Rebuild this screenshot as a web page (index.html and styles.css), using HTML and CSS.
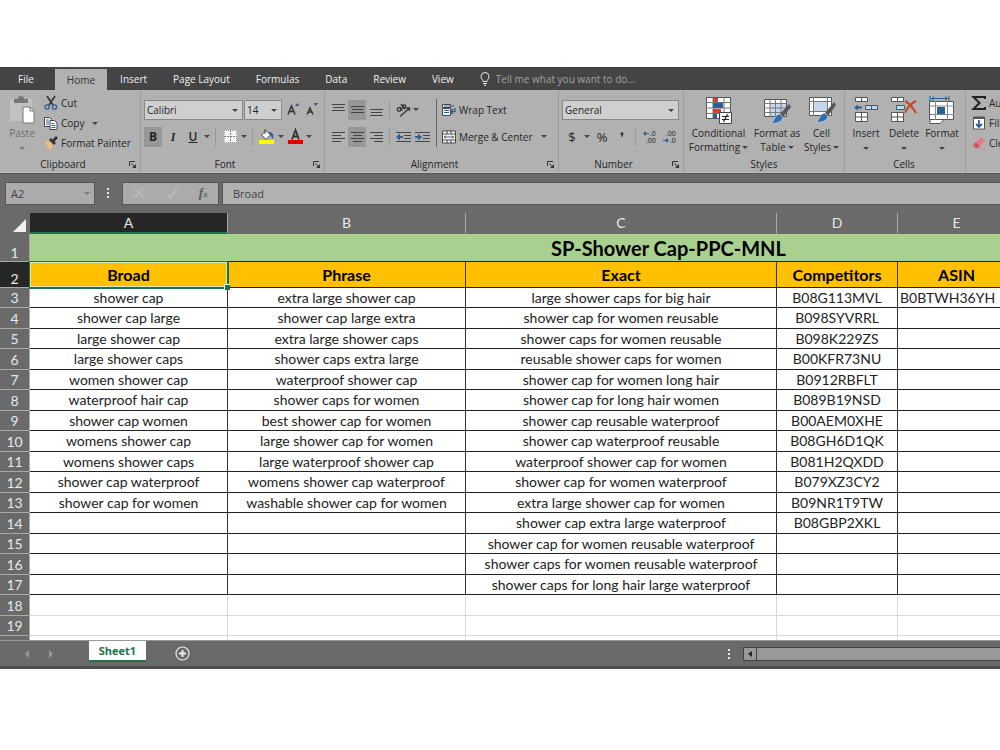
FILE: index.html
```html
<!DOCTYPE html>
<html lang="en">
<head>
<meta charset="utf-8">
<title>SP-Shower Cap-PPC-MNL</title>
<link rel="stylesheet" href="styles.css">
</head>
<body>
<main class="app">
  <nav class="tabs">
    <button class="tab file">File</button>
    <button class="tab active">Home</button>
    <button class="tab">Insert</button>
    <button class="tab">Page Layout</button>
    <button class="tab">Formulas</button>
    <button class="tab">Data</button>
    <button class="tab">Review</button>
    <button class="tab">View</button>
    <label class="tell">
      <svg width="10" height="14" viewBox="0 0 10 14" fill="none" stroke="#e8e8e8"><path d="M3 9.5C3 7.5 1 7 1 4.5a4 4 0 0 1 8 0C9 7 7 7.500 7 9.500zM3 11.500h4M4 13.300h2"/></svg>
      <input type="text" placeholder="Tell me what you want to do..." aria-label="Tell me what you want to do">
    </label>
  </nav>

  <section class="ribbon">
    <div class="group clipboard">
      <div class="body">
        <button class="big paste">
          <svg width="26" height="28" viewBox="0 0 26 28"><path d="M1 3h22v22H1z" fill="#c2c2c2"/><path d="M5 7V3h4a3 3 0 0 1 6 0h4v4z" fill="#777"/><path d="M14 11h7l4 4v12H14z" fill="#fff" stroke="#777"/><path d="M21 11v4h4" fill="none" stroke="#777"/></svg>
          <span>Paste</span><i class="arrow"></i>
        </button>
        <div class="stack">
          <button class="line"><svg width="14" height="14" viewBox="0 0 14 14" fill="none"><path d="M3 0l6 9M11 0L5 9" stroke="#3b3b3b" stroke-width="1.800"/><circle cx="3" cy="11" r="2.200" stroke="#2d5f94" stroke-width="1.300"/><circle cx="10.500" cy="11" r="2.200" stroke="#2d5f94" stroke-width="1.300"/></svg>Cut</button>
          <button class="line"><svg width="14" height="14" viewBox="0 0 14 14" fill="#fff" stroke="#444"><path d="M.5 1.500h5l2 2v7h-7z"/><path d="M6 4.500h4.500l2.500 2.500v6.500H6z"/><path d="M2 4h3M2 6h3M2 8h3M7.500 7.500h3M7.500 9.500h4M7.500 11.500h4" stroke="#2d5f94"/></svg>Copy<i class="arrow gap"></i></button>
          <button class="line"><svg width="14" height="14" viewBox="0 0 14 14"><path d="M1 5l5 1 3 4-4 4z" fill="#f2bd77"/><path d="M5 4l2-2 5 5-2 2z" fill="#333"/><path d="M8 4l4-4 2 2-4 4z" fill="#333"/></svg>Format Painter</button>
        </div>
      </div>
      <div class="caption">Clipboard<svg class="launch" width="7" height="7" viewBox="0 0 7 7"><path d="M.5 5V.5H6M2.500 2.500l3 3" stroke="#333" fill="none"/><path d="M7 3v4H3z" fill="#333"/></svg></div>
    </div>

    <div class="group font">
      <div class="body rows">
        <div class="row">
          <span class="pick name"><select aria-label="Font"><option>Calibri</option></select></span><span class="pick size"><select aria-label="Font size"><option>14</option></select></span>
          <button class="ic grow" aria-label="Grow font"><svg width="13" height="15" viewBox="0 0 13 15"><path d="M1 12.500L4.500 4 8 12.500M2.500 9.500h4" fill="none" stroke="#333" stroke-width="1.500"/><path d="M8 4l2.300-3L12.500 4z" fill="#2d5f94"/></svg></button>
          <button class="ic" aria-label="Shrink font"><svg width="13" height="15" viewBox="0 0 13 15"><path d="M1 12.500L4 6 7 12.500M2.300 10h3.500" fill="none" stroke="#333" stroke-width="1.400"/><path d="M7.500 1h4.500L9.800 4z" fill="#2d5f94"/></svg></button>
        </div>
        <div class="row tools">
          <button class="ic on b">B</button><button class="ic i">I</button><button class="ic u">U</button><i class="arrow"></i>
          <i class="sep"></i>
          <button class="ic" aria-label="Borders"><svg width="13" height="13" viewBox="0 0 13 13"><path d="M0 0h13v13H0z" fill="#f5f5f5"/><path d="M0 .5h13M0 12.500h13M.5 0v13M12.500 0v13" stroke="#999" stroke-dasharray="1 1"/><path d="M0 6.500h13M6.500 0v13" stroke="#777" stroke-dasharray="2 1"/></svg></button><i class="arrow"></i>
          <i class="sep"></i>
          <button class="ic" aria-label="Fill color"><svg width="16" height="15" viewBox="0 0 16 15"><path d="M0 11h15v4H0z" fill="#ff0"/><path d="M2.500 6L7 1.500 11.500 6 7 10.500z" fill="#fff" stroke="#444"/><path d="M6 0v5" stroke="#444"/><path d="M10 3c4 0 5 3 4 7-2-1-1-4-4-5z" fill="#2d5f94"/></svg></button><i class="arrow"></i>
          <button class="ic" aria-label="Font color"><svg width="15" height="15" viewBox="0 0 15 15"><path d="M0 11h15v4H0z" fill="#e00000"/><path d="M4 10.500L7.500 1 11 10.500M5 7.500h5" fill="none" stroke="#333" stroke-width="1.800"/></svg></button><i class="arrow"></i>
        </div>
      </div>
      <div class="caption">Font<svg class="launch" width="7" height="7" viewBox="0 0 7 7"><path d="M.5 5V.5H6M2.500 2.500l3 3" stroke="#333" fill="none"/><path d="M7 3v4H3z" fill="#333"/></svg></div>
    </div>

    <div class="group align">
      <div class="body">
        <div class="rows">
          <div class="row tight">
            <button class="ic" aria-label="Top align"><svg width="13" height="14" viewBox="0 0 13 14"><path d="M0 1.500h13M1 4.500h11M0 7.500h13" stroke="#444"/></svg></button>
            <button class="ic on" aria-label="Middle align"><svg width="13" height="14" viewBox="0 0 13 14"><path d="M0 3.500h13M1 6.500h11M0 9.500h13" stroke="#444"/></svg></button>
            <button class="ic" aria-label="Bottom align"><svg width="13" height="14" viewBox="0 0 13 14"><path d="M0 6.500h13M1 9.500h11M0 12.500h13" stroke="#444"/></svg></button>
            <i class="sep"></i>
            <button class="ic" aria-label="Orientation"><svg width="15" height="14" viewBox="0 0 15 14" fill="none" stroke="#333" stroke-width="1.300"><circle cx="3" cy="6.500" r="1.800"/><path d="M3.500 4l3 3.500M5 1l4 5"/><circle cx="8" cy="3.500" r="1.700"/><path d="M4 13.500L13.500 5M10.500 5h3v3"/></svg></button><i class="arrow"></i>
          </div>
          <div class="row tight">
            <button class="ic" aria-label="Align left"><svg width="13" height="12" viewBox="0 0 13 12"><path d="M0 1.500h13M0 4.500h9M0 7.500h13M0 10.500h9" stroke="#444"/></svg></button>
            <button class="ic on" aria-label="Center"><svg width="13" height="12" viewBox="0 0 13 12"><path d="M0 1.500h13M2 4.500h9M0 7.500h13M2 10.500h9" stroke="#444"/></svg></button>
            <button class="ic" aria-label="Align right"><svg width="13" height="12" viewBox="0 0 13 12"><path d="M0 1.500h13M4 4.500h9M0 7.500h13M4 10.500h9" stroke="#444"/></svg></button>
            <i class="sep"></i>
            <button class="ic" aria-label="Decrease indent"><svg width="15" height="12" viewBox="0 0 15 12"><path d="M0 1.500h15M8 4.500h7M8 7.500h7M0 10.500h15" stroke="#444"/><path d="M0 6l4-3.500V5h3v2H4v2.500z" fill="#2d5f94"/></svg></button>
            <button class="ic" aria-label="Increase indent"><svg width="15" height="12" viewBox="0 0 15 12"><path d="M0 1.500h15M8 4.500h7M8 7.500h7M0 10.500h15" stroke="#444"/><path d="M7 6L3 2.500V5H0v2h3v2.500z" fill="#2d5f94"/></svg></button>
          </div>
        </div>
        <i class="divider"></i>
        <div class="rows wraps">
          <button class="line"><svg width="14" height="14" viewBox="0 0 14 14"><path d="M.5 1.500h8v3h-8zM.5 5.500h8v7h-8z" fill="#fff" stroke="#444"/><path d="M2 3h10M2 7.500h5M2 9.500h5" stroke="#2d5f94"/><path d="M13 5v3.500H9M11 6l-2.500 2.500L11 11" fill="none" stroke="#2d5f94" stroke-width="1.400"/></svg>Wrap Text</button>
          <button class="line"><svg width="14" height="14" viewBox="0 0 14 14"><path d="M.5 1h13v12H.5z" fill="#fff" stroke="#444"/><path d="M0 4h14M0 10h14M5 1v3M9 1v3M5 10v3M9 10v3" stroke="#444"/><path d="M2 7h10M4 5.500L2.500 7 4 8.500M10 5.500L11.500 7 10 8.500" fill="none" stroke="#2d5f94"/></svg>Merge &amp; Center<i class="arrow gap"></i></button>
        </div>
      </div>
      <div class="caption">Alignment<svg class="launch" width="7" height="7" viewBox="0 0 7 7"><path d="M.5 5V.5H6M2.500 2.500l3 3" stroke="#333" fill="none"/><path d="M7 3v4H3z" fill="#333"/></svg></div>
    </div>

    <div class="group number">
      <div class="body rows">
        <div class="row"><span class="pick format"><select aria-label="Number format"><option>General</option></select></span></div>
        <div class="row">
          <button class="ic sym">$</button><i class="arrow"></i><button class="ic sym">%</button><button class="ic sym comma">❜</button>
          <i class="sep"></i>
          <button class="ic dec" aria-label="Increase decimal"><svg width="15" height="16" viewBox="0 0 15 16"><path d="M0 4.500L3 2v2h3v1H3v2z" fill="#2d5f94"/><text x="7" y="7">.0</text><text x="3" y="14">.00</text></svg></button>
          <button class="ic dec" aria-label="Decrease decimal"><svg width="15" height="16" viewBox="0 0 15 16"><text x="3" y="7">.00</text><path d="M6 11.500L3 9v2H0v1h3v2z" fill="#2d5f94"/><text x="7" y="14">.0</text></svg></button>
        </div>
      </div>
      <div class="caption">Number<svg class="launch" width="7" height="7" viewBox="0 0 7 7"><path d="M.5 5V.5H6M2.500 2.500l3 3" stroke="#333" fill="none"/><path d="M7 3v4H3z" fill="#333"/></svg></div>
    </div>

    <div class="group styles">
      <div class="body">
        <button class="big cond"><svg width="28" height="28" viewBox="0 0 28 28"><path d="M1.500 1.500h24v21h-24z" fill="#fff" stroke="#555"/><path d="M1 6.500h25M1 12h25M1 17.500h25M8 1v22M19 1v22" stroke="#777"/><path d="M8 2h5v4H8zM8 13h8v4H8z" fill="#c8452d"/><path d="M8 7h10v5H8zM8 18h4v4H8z" fill="#2d5f94"/><path d="M14.500 16.500h12v11h-12z" fill="#fff" stroke="#444"/><path d="M17 20.500h7M17 23.500h7M22.500 18l-4 8" stroke="#222" stroke-width="1.200"/></svg><span>Conditional<br>Formatting<i class="arrow"></i></span></button>
        <button class="big tbl"><svg width="28" height="28" viewBox="0 0 28 28"><path d="M1.500 3.500h22v17h-22z" fill="#fff" stroke="#555"/><path d="M7 8h16v12H7z" fill="#c3d8eb"/><path d="M1 7.500h23M1 12h23M1 16.500h23M7 3v18M12.500 3v18M18 3v18" stroke="#777"/><path d="M26 8l2 3-8 10-3-3z" fill="#555"/><path d="M17 18l3 3c-1 5-6 7-12 6 4-2 3-8 9-9z" fill="#2d6db0" stroke="#e8e8e8" stroke-width=".6"/></svg><span>Format as<br>Table<i class="arrow"></i></span></button>
        <button class="big cell"><svg width="28" height="28" viewBox="0 0 28 28"><path d="M1.500 1.500h22v18h-22z" fill="#fff" stroke="#555"/><path d="M6 6h13v9H6z" fill="#c3d8eb"/><path d="M1 5.500h23M1 15.500h23M5.500 1v19M19.500 1v19" stroke="#777"/><path d="M26 6l2 3-8 11-3-3z" fill="#555"/><path d="M17 17l3 3c-1 5-6 7-12 6 4-2 3-8 9-9z" fill="#2d6db0" stroke="#e8e8e8" stroke-width=".6"/></svg><span>Cell<br>Styles<i class="arrow"></i></span></button>
      </div>
      <div class="caption">Styles</div>
    </div>

    <div class="group cells">
      <div class="body">
        <button class="big"><svg width="26" height="28" viewBox="0 0 26 28" fill="#fff" stroke="#555"><path d="M2.500 1.500h12v4h-12zM8.500 1.500v4M2.500 16.500h12v9h-12zM8.500 16.500v9M2.500 21h12"/><path d="M12.500 9.500h12v4h-12zM18.500 9.500v4" fill="#c3d8eb" stroke="#2d5f94"/><path d="M1 11.500l4-3v2h4v2H5v2z" fill="#2d5f94" stroke="none"/></svg><span>Insert</span><i class="arrow"></i></button>
        <button class="big"><svg width="26" height="28" viewBox="0 0 26 28" fill="#fff" stroke="#555"><path d="M.5 1.500h12v4H.5zM6.500 1.500v4M.5 16.500h12v9H.5zM6.500 16.500v9M.5 21h12"/><path d="M5.500 9.500h8v4h-8z" fill="#c3d8eb" stroke="#2d5f94"/><path d="M14 5c4 2 8 7 11 12M25 5c-4 2-9 7-11 12" fill="none" stroke="#c8452d" stroke-width="2"/></svg><span>Delete</span><i class="arrow"></i></button>
        <button class="big"><svg width="26" height="28" viewBox="0 0 26 28" fill="#fff" stroke="#555"><path d="M.5 5.500h24v18h-24zM1 23.500h14l-4 4H1z"/><path d="M1 10h24M1 18.500h24M6.500 5v19M18.500 5v19" stroke="#888"/><path d="M8 11h8v7H8z" fill="#2d5f94" stroke="none"/><path d="M1 0v5M20 0v5M2 2.500h17M5 .5l-2.500 2L5 4.500M16 .5l2.500 2-2.500 2" fill="none" stroke="#2d5f94"/></svg><span>Format</span><i class="arrow"></i></button>
      </div>
      <div class="caption">Cells</div>
    </div>

    <div class="group editing">
      <div class="body stack">
        <button class="line"><svg width="14" height="14" viewBox="0 0 14 14"><path d="M13 3V1H1.500l6 6-6 6H13v-2" fill="none" stroke="#222" stroke-width="2"/></svg>AutoSum</button>
        <button class="line"><svg width="14" height="14" viewBox="0 0 14 14"><path d="M1.500 1h11v12h-11z" fill="#fff" stroke="#555"/><path d="M1 2h12" stroke="#555" stroke-width="2"/><path d="M7 4v7M4 8l3 3 3-3" fill="none" stroke="#2d5f94" stroke-width="1.800"/></svg>Fill</button>
        <button class="line"><svg width="14" height="14" viewBox="0 0 14 14"><path d="M4 6l5-5 4 4-5 5z" fill="#e8768a"/><path d="M1 9l3-3 4 4-2 2H3z" fill="#d2536b"/><path d="M5 12.500h8" stroke="#d98c99"/></svg>Clear</button>
      </div>
    </div>
  </section>

  <section class="formula">
    <span class="pick box"><input type="text" value="A2" aria-label="Name box"></span>
    <i class="dots"></i>
    <div class="fx">
      <button aria-label="Cancel"><svg width="12" height="12" viewBox="0 0 12 12"><path d="M1.500 1.500l9 9M10.500 1.500l-9 9" stroke="#bcbcbc" stroke-width="1.500"/></svg></button>
      <button aria-label="Enter"><svg width="12" height="12" viewBox="0 0 12 12"><path d="M1 6.500l3.500 4L11 2" fill="none" stroke="#bcbcbc" stroke-width="1.800"/></svg></button>
      <button class="fn">f<small>x</small></button>
    </div>
    <input class="entry" type="text" value="Broad" aria-label="Formula bar">
  </section>

  <section class="sheet">
    <table>
      <colgroup><col class="cn"><col class="ca"><col class="cb"><col class="cc"><col class="cd"><col class="ce"><col class="cf"></colgroup>
      <thead><tr><th class="corner"><svg width="13" height="13" viewBox="0 0 13 13"><path d="M13 0v13H0z" fill="#f0f0f0"/></svg></th><th class="sel">A</th><th>B</th><th>C</th><th>D</th><th>E</th><th>F</th></tr></thead>
      <tbody>
        <tr class="title"><th>1</th><td colspan="6">SP-Shower Cap-PPC-MNL</td></tr>
        <tr class="heads"><th class="sel">2</th><td class="cursor">Broad</td><td>Phrase</td><td>Exact</td><td>Competitors</td><td>ASIN</td><td></td></tr>
        <tr><th>3</th><td>shower cap</td><td>extra large shower cap</td><td>large shower caps for big hair</td><td>B08G113MVL</td><td class="left">B0BTWH36YH</td><td></td></tr>
        <tr><th>4</th><td>shower cap large</td><td>shower cap large extra</td><td>shower cap for women reusable</td><td>B098SYVRRL</td><td></td><td></td></tr>
        <tr><th>5</th><td>large shower cap</td><td>extra large shower caps</td><td>shower caps for women reusable</td><td>B098K229ZS</td><td></td><td></td></tr>
        <tr><th>6</th><td>large shower caps</td><td>shower caps extra large</td><td>reusable shower caps for women</td><td>B00KFR73NU</td><td></td><td></td></tr>
        <tr><th>7</th><td>women shower cap</td><td>waterproof shower cap</td><td>shower cap for women long hair</td><td>B0912RBFLT</td><td></td><td></td></tr>
        <tr><th>8</th><td>waterproof hair cap</td><td>shower caps for women</td><td>shower cap for long hair women</td><td>B089B19NSD</td><td></td><td></td></tr>
        <tr><th>9</th><td>shower cap women</td><td>best shower cap for women</td><td>shower cap reusable waterproof</td><td>B00AEM0XHE</td><td></td><td></td></tr>
        <tr><th>10</th><td>womens shower cap</td><td>large shower cap for women</td><td>shower cap waterproof reusable</td><td>B08GH6D1QK</td><td></td><td></td></tr>
        <tr><th>11</th><td>womens shower caps</td><td>large waterproof shower cap</td><td>waterproof shower cap for women</td><td>B081H2QXDD</td><td></td><td></td></tr>
        <tr><th>12</th><td>shower cap waterproof</td><td>womens shower cap waterproof</td><td>shower cap for women waterproof</td><td>B079XZ3CY2</td><td></td><td></td></tr>
        <tr><th>13</th><td>shower cap for women</td><td>washable shower cap for women</td><td>extra large shower cap for women</td><td>B09NR1T9TW</td><td></td><td></td></tr>
        <tr><th>14</th><td></td><td></td><td>shower cap extra large waterproof</td><td>B08GBP2XKL</td><td></td><td></td></tr>
        <tr><th>15</th><td></td><td></td><td>shower cap for women reusable waterproof</td><td></td><td></td><td></td></tr>
        <tr><th>16</th><td></td><td></td><td>shower caps for women reusable waterproof</td><td></td><td></td><td></td></tr>
        <tr><th>17</th><td></td><td></td><td>shower caps for long hair large waterproof</td><td></td><td></td><td></td></tr>
        <tr class="plain"><th>18</th><td></td><td></td><td></td><td></td><td></td><td></td></tr>
        <tr class="plain"><th>19</th><td></td><td></td><td></td><td></td><td></td><td></td></tr>
        <tr class="plain stub"><th></th><td></td><td></td><td></td><td></td><td></td><td></td></tr>
      </tbody>
    </table>
  </section>

  <footer class="bottom">
    <div class="arrows">
      <button aria-label="Previous sheet"><svg width="4" height="8" viewBox="0 0 4 8"><path d="M4 0v8L0 4z" fill="#9a9a9a"/></svg></button>
      <button aria-label="Next sheet"><svg width="4" height="8" viewBox="0 0 4 8"><path d="M0 0v8l4-4z" fill="#9a9a9a"/></svg></button>
    </div>
    <button class="sheettab">Sheet1</button>
    <button class="add" aria-label="New sheet"><svg width="15" height="15" viewBox="0 0 15 15" fill="none" stroke="#ececec"><circle cx="7.500" cy="7.500" r="6.500" stroke-width="1.200"/><path d="M7.500 4v7M4 7.500h7" stroke-width="2"/></svg></button>
    <i class="dots"></i>
    <div class="scroll"><button aria-label="Scroll left"><svg width="4" height="6" viewBox="0 0 4 6"><path d="M4 0v6L0 3z" fill="#222"/></svg></button><div class="thumb"></div></div>
  </footer>
</main>
</body>
</html>
```
FILE: styles.css
```css
* { box-sizing: border-box; }
body { margin: 0; background: #fff; }
button, input, select {
  font: inherit; color: inherit; background: none; border: 0; padding: 0; margin: 0;
  border-radius: 0; appearance: none; outline: 0; white-space: nowrap;
}
svg { display: block; flex: none; overflow: visible; }
.app { margin-top: 67px; overflow: hidden; font: 10px/14px "Open Sans", "Noto Sans", sans-serif; color: #262626; background: #6a6a6a; }

.tabs { display: flex; height: 23px; background: #444; color: #f0f0f0; }
.tab { padding: 1px 13px 0; }
.tab.file { padding: 1px 21px 0 18px; }
.tab.active { background: #b1b1b1; color: #333; margin-top: 2px; padding: 0 12px; }
.tell { display: flex; align-items: center; gap: 6px; padding-left: 13px; flex: 1; }
.tell input { width: 200px; padding-top: 1px; }
.tell input::placeholder { color: #a2a2a2; opacity: 1; }

.ribbon { display: flex; height: 83px; background: #b1b1b1; border-bottom: 1px solid #bcbcbc; }
.group { display: flex; flex-direction: column; flex: none; padding: 3px 0 2px; border-right: 1px solid #9c9c9c; }
.body { display: flex; flex: 1; }
.caption { position: relative; text-align: center; line-height: 12px; }
.launch { position: absolute; right: 4px; top: 3px; }
.clipboard { width: 141px; padding-left: 6px; }
.clipboard .caption { padding-right: 20px; }
.font { width: 184px; padding-left: 3px; }
.font .caption { padding-right: 18px; }
.align { width: 234px; padding-left: 4px; }
.align .caption { padding-right: 18px; }
.number { width: 125px; padding-left: 3px; }
.number .caption { padding-right: 18px; }
.styles { width: 161px; }
.cells { width: 121px; padding-left: 2px; }
.cells .caption { padding-right: 4px; }
.editing { width: 120px; padding-left: 6px; border: 0; }

.arrow { display: inline-block; flex: none; border: 3px solid transparent; border-top-color: #444; border-bottom: 0; }
.arrow.gap { margin-left: 5px; }
.big { display: flex; flex: none; flex-direction: column; align-items: center; padding-top: 3px; line-height: 14px; }
.big svg { margin-bottom: 2px; }
.big > .arrow { margin-top: 7px; }
.big span .arrow { margin: 0 0 2px 2px; }
.paste { width: 32px; color: #6e6e6e; }
.paste .arrow { border-top-color: #777; }
.cond { width: 69px; }
.tbl { width: 48px; }
.cell { width: 41px; }
.cells .big { width: 38px; }
.stack { display: flex; flex-direction: column; }
.line { display: flex; align-items: center; gap: 3px; height: 20px; text-align: left; }
.clipboard .stack { padding-left: 6px; }
.rows { display: flex; flex-direction: column; gap: 6px; padding-top: 6px; }
.row { display: flex; align-items: center; height: 21px; gap: 2px; }
.font .row { gap: 1px; }
.font .tools { gap: 2px; }
.tight { gap: 1px; }
.ic { display: flex; align-items: center; justify-content: center; width: 18px; height: 20px; font-size: 12px; }
.ic.on { background: #979797; }
.ic.b { font-weight: 700; }
.ic.i { font-family: "Liberation Serif", serif; font-style: italic; font-weight: 700; }
.ic.u { font-weight: 600; text-decoration: underline; }
.ic.grow { margin-left: 1px; }
.ic.sym { font-size: 13px; width: 20px; }
.ic.comma { width: 16px; }
.dec text { font: 7px "Open Sans", sans-serif; fill: #222; }
.sep { width: 1px; height: 18px; margin: 0 3px; background: #999; flex: none; }
.divider { width: 1px; height: 48px; margin: 6px 5px 0 5px; background: #666; }
.wraps .line { height: 21px; }

.pick { position: relative; display: block; background: #cfcfcf; border: 1px solid #888; height: 20px; flex: none; }
.pick::after { content: ""; position: absolute; right: 4px; top: 8px; border: 3px solid transparent; border-top-color: #444; border-bottom: 0; pointer-events: none; }
.pick select, .pick input { width: 100%; height: 18px; padding-left: 2px; }
.pick.name { width: 99px; }
.pick.size { width: 38px; }
.pick.format { width: 117px; }

.formula { display: flex; align-items: center; height: 40px; padding-bottom: 1px; color: #444; border-top: 1px solid #5a5a5a; }
.pick.box { width: 90px; height: 23px; margin-left: 5px; background: #ababab; border-color: #555; font-size: 11px; }
.pick.box input { height: 21px; padding-left: 5px; }
.pick.box::after { border-top-color: #7c7c7c; top: 9px; }
.dots { width: 2px; height: 10px; flex: none; background: repeating-linear-gradient(#e8e8e8 0 2px, transparent 2px 4px); }
.formula .dots { margin: 0 13px 0 12px; }
.fx { display: flex; align-items: center; justify-content: space-around; width: 97px; height: 23px; background: #ababab; border: 1px solid #555; flex: none; }
.fn { font: italic 700 13px/18px "Liberation Serif", serif; color: #5c5c5c; }
.fn small { font-size: 9px; }
.entry { flex: 1; min-width: 0; height: 23px; margin-left: 3px; padding-left: 10px; background: #b1b1b1; border: 1px solid #555; border-right: 0; font-size: 11px; }

.sheet { overflow: hidden; background: #fff; }
table { table-layout: fixed; width: 1308px; border-collapse: separate; border-spacing: 0; font: 14px/18px Lato, sans-serif; color: #222; }
.cn { width: 30px; } .ca { width: 198px; } .cb { width: 238px; } .cc { width: 311px; } .cd { width: 121px; } .ce { width: 118px; } .cf { width: 292px; }
th, td { padding: 0; text-align: center; white-space: nowrap; overflow: hidden; }
th { font-weight: 400; background: #6a6a6a; color: #e8e8e8; border-right: 1px solid #a8a8a8; border-bottom: 1px solid #a8a8a8; }
th.sel { background: #262626; }
thead th { height: 21px; border-bottom-color: #6a6a6a; }
thead .sel { border-bottom: 2px solid #217346; }
.corner { border-color: #6a6a6a; }
.corner svg { margin: 4px 0 0 13px; }
tbody th { line-height: 17px; }
tbody tr { height: 21px; }
tbody tr:nth-child(odd) { height: 20px; }
td { border-right: 1px solid #333; border-bottom: 1px solid #222; }
tbody tr.title { height: 28px; }
.title td { background: #a9d08e; font-size: 20px; line-height: 26px; font-weight: 700; color: #000; }
tbody tr.heads { height: 26px; }
.title th, .heads th { vertical-align: bottom; }
.heads td { background: #ffc000; font-size: 16px; font-weight: 700; color: #000; }
.heads .cursor { position: relative; overflow: visible; box-shadow: inset 0 0 0 1px #d8e8c0; border-color: #217346; outline: 1px solid #217346; }
.cursor::after { content: ""; position: absolute; right: -3px; bottom: -3px; width: 5px; height: 5px; background: #217346; border: 1px solid #fff; border-width: 1px 0 0 1px; }
td.left { text-align: left; padding-left: 2px; }
.plain td { border-color: #d9d9d9; }
tbody tr.stub { height: 4px; }
.stub th, .stub td { border-bottom: 0; }

.bottom { display: flex; align-items: center; height: 29px; border-top: 1px solid #999; border-bottom: 3px solid #4c4c4c; }
.arrows { display: flex; gap: 20px; padding-left: 25px; width: 89px; }
.sheettab { width: 57px; height: 21px; align-self: flex-start; background: #fff; color: #217346; font-size: 11px; font-weight: 700; border-bottom: 2px solid #217346; }
.add { margin-left: 29px; }
.bottom .dots { margin-left: auto; margin-right: 13px; }
.scroll { display: flex; width: 257px; height: 14px; background: #999; border: 1px solid #444; border-right: 0; }
.scroll button { display: flex; align-items: center; justify-content: center; width: 13px; border-right: 1px solid #444; }
```
